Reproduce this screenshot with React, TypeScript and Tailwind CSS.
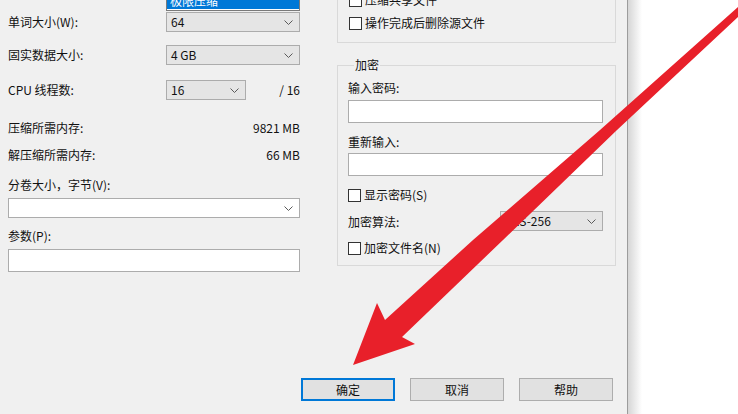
import React from "react";

const font = { fontFamily: '"Noto Sans CJK SC", "Noto Sans", sans-serif' };

function Chevron() {
  return (
    <svg width="9" height="5" viewBox="0 0 9 5" className="shrink-0">
      <polyline points="0.5,0.5 4.5,4.5 8.5,0.5" fill="none" stroke="#5a5a5a" strokeWidth="1" />
    </svg>
  );
}

function Combo({ value, w, white }: { value?: string; w: string; white?: boolean }) {
  return (
    <div
      className={`${w} h-[20px] flex items-center justify-between pl-[4px] pr-[6px] border border-[#acacac] ${
        white ? "bg-white" : "bg-[#e5e5e5]"
      }`}
    >
      <span className="leading-none">{value}</span>
      <Chevron />
    </div>
  );
}

function Check({ label }: { label: string }) {
  return (
    <div className="flex items-center h-[14px] gap-[3px]">
      <div className="w-[13px] h-[13px] border border-[#333333] bg-white shrink-0" />
      <span className="leading-none">{label}</span>
    </div>
  );
}

function Btn({ label, primary }: { label: string; primary?: boolean }) {
  return (
    <div
      className={`w-[94px] h-[23px] flex items-center justify-center bg-[#e1e1e1] ${
        primary ? "border-2 border-[#0078d7]" : "border border-[#adadad]"
      }`}
    >
      {label}
    </div>
  );
}

export default function App() {
  return (
    <div className="relative w-[738px] h-[414px] overflow-hidden bg-white flex text-[12px] text-[#111111]" style={font}>
      <div className="w-[628px] h-full bg-[#f0f0f0] border-r border-[#9c9c9c] flex flex-col shrink-0">
        <div className="flex">
          {/* left column */}
          <div className="ml-[8px] w-[292px] flex flex-col">
            <div className="relative mt-[12px] h-[20px] flex items-center">
              <span className="w-[158px]">单词大小(W):</span>
              <Combo value="64" w="w-[134px]" />
              <div className="absolute left-[158px] top-[-22px] w-[134px] h-[21px] bg-white border border-[#7a7a7a] flex flex-col justify-end pb-[1px]">
                <div className="h-[16px] bg-[#0078d7] text-white pl-[3px] flex items-center leading-none">极限压缩</div>
              </div>
            </div>
            <div className="mt-[13px] h-[20px] flex items-center">
              <span className="w-[158px]">固实数据大小:</span>
              <Combo value="4 GB" w="w-[134px]" />
            </div>
            <div className="mt-[15px] h-[20px] flex items-center">
              <span className="w-[158px]">CPU 线程数:</span>
              <Combo value="16" w="w-[80px]" />
              <span className="flex-1 text-right">/ 16</span>
            </div>
            <div className="mt-[18px] h-[20px] flex items-center justify-between">
              <span>压缩所需内存:</span>
              <span>9821 MB</span>
            </div>
            <div className="mt-[7px] h-[20px] flex items-center justify-between">
              <span>解压缩所需内存:</span>
              <span>66 MB</span>
            </div>
            <div className="mt-[12px] h-[16px] flex items-center">分卷大小，字节(V):</div>
            <div className="mt-[5px]">
              <Combo w="w-[292px]" white />
            </div>
            <div className="mt-[10px] h-[16px] flex items-center">参数(P):</div>
            <div className="mt-[5px] w-[292px] h-[23px] bg-white border border-[#acacac]" />
          </div>

          {/* right column */}
          <div className="ml-[37px] w-[279px] flex flex-col">
            <div className="mt-[-30px] h-[73px] border border-[#d9d9d9] pl-[11px] flex flex-col">
              <div className="mt-[22px]">
                <Check label="压缩共享文件" />
              </div>
              <div className="mt-[9px]">
                <Check label="操作完成后删除源文件" />
              </div>
            </div>
            <fieldset className="mt-[14px] h-[209px] border border-[#d9d9d9] pl-[10px] flex flex-col">
              <legend className="ml-[6px] px-[1px] h-[16px] leading-[16px]">加密</legend>
              <div className="mt-[7px] h-[16px] flex items-center">输入密码:</div>
              <div className="mt-[4px] w-[255px] h-[23px] bg-white border border-[#acacac]" />
              <div className="mt-[11px] h-[16px] flex items-center">重新输入:</div>
              <div className="mt-[3px] w-[255px] h-[23px] bg-white border border-[#acacac]" />
              <div className="mt-[12px]">
                <Check label="显示密码(S)" />
              </div>
              <div className="mt-[9px] h-[21px] flex items-center">
                <span className="w-[152px]">加密算法:</span>
                <div className="h-[21px] flex">
                  <Combo value="AES-256" w="w-[103px]" />
                </div>
              </div>
              <div className="mt-[9px]">
                <Check label="加密文件名(N)" />
              </div>
            </fieldset>
          </div>
        </div>

        <div className="mt-auto mb-[13px] pl-[301px] flex gap-[15px]">
          <Btn label="确定" primary />
          <Btn label="取消" />
          <Btn label="帮助" />
        </div>
      </div>
      <div className="w-[14px] h-full bg-linear-to-r from-[#d6d6d6] to-white" />

      <svg className="absolute inset-0 pointer-events-none" width="738" height="414" viewBox="0 0 738 414">
        <polygon
          fill="#e8202a"
          points="750,0 738,7 600,130 473,240 385,320 377,303 353,365 415,344 402,337 503,240 617,130 738,17 750,10"
        />
      </svg>
    </div>
  );
}
